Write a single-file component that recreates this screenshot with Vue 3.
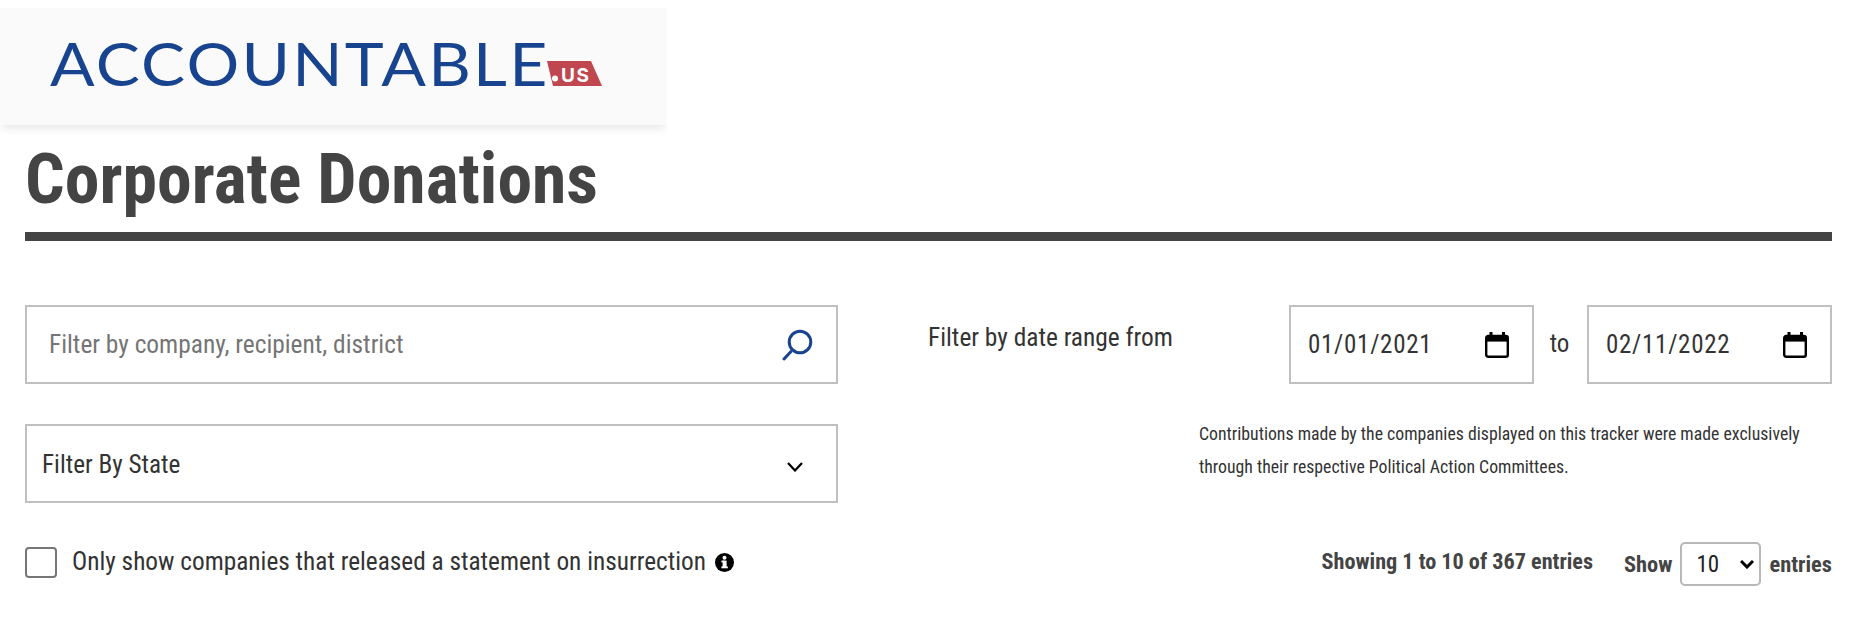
<script setup>
const states = ['Filter By State']
const sizes = [10, 25, 50, 100]
</script>

<template>
  <div class="page">
    <header class="logo-bar">
      <div class="logo">
        <span class="wordmark">ACCOUNTABLE</span>
        <svg class="badge" width="56" height="26" viewBox="0 0 56 26">
          <polygon points="0,1 44,1 55,26 6,26" fill="#c0474f" />
          <circle cx="8" cy="18.5" r="3" fill="#fff" />
          <text x="14" y="21.5" class="badge-text">US</text>
        </svg>
      </div>
    </header>

    <main class="content">
      <h1 class="title">Corporate Donations</h1>

      <div class="filters">
        <div class="col-left">
          <label class="field search">
            <input class="field-input" type="text" placeholder="Filter by company, recipient, district" />
            <svg width="32" height="32" viewBox="0 0 32 32" fill="none" stroke="#17438f" stroke-width="3" stroke-linecap="round">
              <circle cx="18" cy="13" r="10.8" />
              <path d="M9 22.5 L2 30" />
            </svg>
          </label>

          <div class="field state">
            <select class="field-select">
              <option v-for="s in states" :key="s">{{ s }}</option>
            </select>
            <svg class="chevron" width="16" height="10" viewBox="0 0 16 10" fill="none" stroke="#000" stroke-width="2.2">
              <path d="M1 1 L8 8.5 L15 1" />
            </svg>
          </div>

          <label class="check">
            <input class="check-box" type="checkbox" />
            <span class="check-text">Only show companies that released a statement on insurrection</span>
            <svg class="info" width="19" height="19" viewBox="0 0 19 19">
              <circle cx="9.5" cy="9.5" r="9.5" fill="#000" />
              <rect x="7.6" y="7.6" width="4" height="7.4" fill="#fff" />
              <rect x="6.4" y="7.6" width="3" height="1.8" fill="#fff" />
              <rect x="6.4" y="13.4" width="6.4" height="1.9" fill="#fff" />
              <circle cx="9.5" cy="4.8" r="2" fill="#fff" />
            </svg>
          </label>
        </div>

        <div class="col-right">
          <div class="dates">
            <span class="date-label">Filter by date range from</span>
            <div class="field date">
              <span class="date-value">01/01/2021</span>
              <svg width="24" height="26" viewBox="0 0 24 26" fill="none">
                <rect x="1.2" y="4" width="21.6" height="20.8" rx="2" stroke="#000" stroke-width="2.4" />
                <rect x="1.2" y="4" width="21.6" height="5.6" fill="#000" />
                <rect x="4.5" y="0" width="3" height="5" fill="#000" />
                <rect x="17" y="0" width="3" height="5" fill="#000" />
              </svg>
            </div>
            <span class="date-to">to</span>
            <div class="field date">
              <span class="date-value">02/11/2022</span>
              <svg width="24" height="26" viewBox="0 0 24 26" fill="none">
                <rect x="1.2" y="4" width="21.6" height="20.8" rx="2" stroke="#000" stroke-width="2.4" />
                <rect x="1.2" y="4" width="21.6" height="5.6" fill="#000" />
                <rect x="4.5" y="0" width="3" height="5" fill="#000" />
                <rect x="17" y="0" width="3" height="5" fill="#000" />
              </svg>
            </div>
          </div>

          <p class="note">Contributions made by the companies displayed on this tracker were made exclusively<br />through their respective Political Action Committees.</p>

          <div class="table-info">
            <span class="showing">Showing 1 to 10 of 367 entries</span>
            <span class="show">Show</span>
            <div class="size">
              <select class="size-select">
                <option v-for="n in sizes" :key="n">{{ n }}</option>
              </select>
              <svg class="size-chevron" width="14" height="9" viewBox="0 0 14 9" fill="none" stroke="#000" stroke-width="3">
                <path d="M1 1 L7 7 L13 1" />
              </svg>
            </div>
            <span class="show">entries</span>
          </div>
        </div>
      </div>
    </main>
  </div>
</template>

<style>
html, body { background: #fff; }
</style>

<style scoped>
.page {
  width: 1876px;
  height: 634px;
  overflow: hidden;
  padding-top: 8px;
  box-sizing: border-box;
  font-family: "Roboto Condensed", "Roboto", sans-serif;
  font-stretch: 75%;
  color: #333;
}
.logo-bar {
  width: 667px;
  height: 117px;
  background: #fafafa;
  box-shadow: 0 4px 10px -2px rgba(0,0,0,.12);
  clip-path: inset(0 0 -20px 0);
}
.logo {
  display: flex;
  align-items: flex-start;
  padding: 25px 0 0 50px;
}
.wordmark {
  display: inline-block;
  transform: scaleX(1.1);
  transform-origin: left center;
  font-family: "Lato", sans-serif;
  font-stretch: normal;
  font-size: 60px;
  line-height: 60px;
  font-weight: 400;
  letter-spacing: 2px;
  color: #17438f;
}
.badge { margin: 27px 0 0 43px; }
.badge-text { font: 700 19px "Inter", "Roboto", sans-serif; fill: #fff; letter-spacing: 1.5px; }
.content {
  padding: 0 44px 0 25px;
}
.title {
  margin: 14px 0 0;
  height: 93px;
  border-bottom: 9px solid #444;
  font-size: 69.7px;
  line-height: 80px;
  font-weight: 700;
  color: #444;
}
.filters {
  display: flex;
  justify-content: space-between;
  margin-top: 64px;
}
.col-left { width: 813px; }
.col-right { width: 904px; }
.field {
  box-sizing: border-box;
  height: 79px;
  border: 2px solid #c0c0c0;
  background: #fff;
  display: flex;
  align-items: center;
}
.search { padding: 0 22px 0 22px; }
.field-input {
  flex: 1;
  min-width: 0;
  border: 0;
  outline: 0;
  padding: 0 0 2px;
  font: inherit;
  font-size: 25.4px;
  font-stretch: 75%;
  color: #333;
  background: transparent;
}
.field-input::placeholder { color: #757575; opacity: 1; }
.state {
  position: relative;
  margin-top: 40px;
}
.field-select {
  appearance: none;
  width: 100%;
  height: 100%;
  border: 0;
  outline: 0;
  background: transparent;
  padding: 2px 0 0 15px;
  font: inherit;
  font-size: 25.2px;
  font-stretch: 75%;
  color: #333;
}
.chevron {
  position: absolute;
  right: 33px;
  top: 36px;
  pointer-events: none;
}
.check {
  display: flex;
  align-items: center;
  margin-top: 44px;
  font-size: 25.3px;
  color: #333;
}
.check-box {
  appearance: none;
  margin: 0 15px 0 0;
  width: 32px;
  height: 31px;
  border: 2px solid #767676;
  border-radius: 4px;
  background: #fff;
}
.check-text { white-space: nowrap; position: relative; top: -1px; }
.info { margin-left: 9px; }
.dates {
  display: flex;
  align-items: flex-start;
}
.date-label {
  width: 361px;
  padding-top: 15px;
  font-size: 25.4px;
  line-height: 35px;
}
.date {
  width: 245px;
  padding: 0 23px 0 17px;
  justify-content: space-between;
}
.date-value { font-size: 25px; letter-spacing: .7px; color: #333; }
.date-to {
  width: 53px;
  padding-right: 2px;
  box-sizing: border-box;
  text-align: center;
  font-size: 25px;
  line-height: 78px;
}
.note {
  margin: 34px 0 0 271px;
  font-size: 17.75px;
  line-height: 33px;
  color: #333;
}
.table-info {
  display: flex;
  align-items: center;
  justify-content: flex-end;
  margin-top: 58px;
  font-size: 22.4px;
  font-weight: 700;
  color: #444;
}
.showing { margin-right: 31px; position: relative; top: -3px; font-size: 22.2px; }
.size {
  position: relative;
  margin: 0 8px 0 8px;
  height: 44px;
}
.size-select {
  appearance: none;
  box-sizing: border-box;
  width: 81px;
  height: 44px;
  border: 2px solid #b8b8b8;
  border-radius: 5px;
  background: #fff;
  padding: 0 0 0 14px;
  font: inherit;
  font-weight: 400;
  font-size: 23px;
  font-stretch: 75%;
  color: #222;
}
.size-chevron {
  position: absolute;
  right: 7px;
  top: 18px;
  pointer-events: none;
}
</style>
